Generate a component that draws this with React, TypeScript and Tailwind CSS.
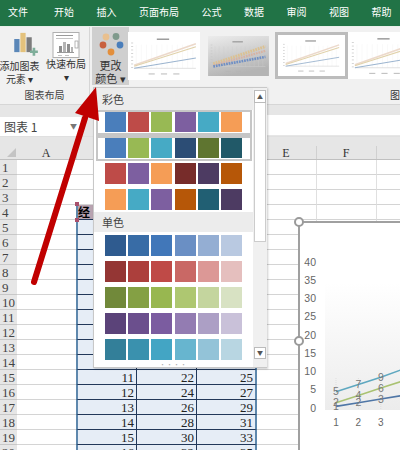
const cjk = { fontFamily: '"Noto Sans CJK SC", sans-serif' };

const tabs = ["文件", "开始", "插入", "页面布局", "公式", "数据", "审阅", "视图", "帮助"];
const colored = [
  ["#4a7ebb", "#be4b48", "#98b954", "#7d5fa0", "#46aac5", "#f59d56"],
  ["#4a7ebb", "#98b954", "#46aac5", "#2c4d75", "#5f7530", "#215968"],
  ["#be4b48", "#7d5fa0", "#f59d56", "#772c2a", "#4d3b62", "#b65708"],
  ["#f59d56", "#46aac5", "#7d5fa0", "#b65708", "#215f73", "#4d3b62"],
];
const mono = [
  ["#2f5b8f", "#386ca6", "#4177b9", "#6a8fc4", "#94aed3", "#b9c9e1"],
  ["#943634", "#ac3f3c", "#bf4a47", "#c96865", "#dc9896", "#e5bfbe"],
  ["#71893a", "#84a044", "#98b750", "#aec771", "#c4d59e", "#d8e2c3"],
  ["#5b4379", "#6b4f8d", "#7b5ca0", "#937cb2", "#ac9fc5", "#c9c1d9"],
  ["#337f99", "#3a91ae", "#43a5c4", "#67b5cf", "#93c3d8", "#b8d6e2"],
];

function Swatches({ rows }: { rows: string[][] }) {
  return (
    <div className="flex flex-col gap-[5px] pl-[11px] pt-[1px]">
      {rows.map((r, i) => (
        <div key={i} className="flex gap-[2.2px] h-[21px]">
          {r.map((c, j) => (
            <div key={j} className="w-[21px] h-[21px]" style={{ background: c }} />
          ))}
        </div>
      ))}
    </div>
  );
}

function Thumb({ kind }: { kind: number }) {
  return (
    <svg viewBox="0 0 70 46" className="w-full h-full block">
      {kind === 1 && (
        <>
          <defs>
            <linearGradient id="g1" x1="0" y1="0" x2="0.3" y2="1">
              <stop offset="0" stopColor="#ececec" />
              <stop offset="1" stopColor="#b4b4b4" />
            </linearGradient>
          </defs>
          <rect width="70" height="46" fill="url(#g1)" />
        </>
      )}
      <rect x="28" y="6" width="12" height="1.4" fill="#999" />
      {[0, 1, 2, 3, 4, 5, 6, 7].map((i) => (
        <rect key={i} x="3" y={10 + i * 3.4} width="2" height="0.7" fill="#c4c4c4" />
      ))}
      {[0, 1, 2, 3, 4, 5, 6, 7, 8, 9, 10, 11].map((i) => (
        <line key={i} x1={8 + i * 5} x2={8 + i * 5} y1="12" y2="35" stroke={kind === 1 ? "#cfcfcf" : "#f1f1f1"} strokeWidth="0.4" />
      ))}
      <line x1="6" y1="35" x2="66" y2="35" stroke="#cfcfcf" strokeWidth="0.6" />
      {kind === 1 ? (
        <>
          <line x1="6" y1="32" x2="66" y2="12" stroke="#dcc191" strokeWidth="3.4" strokeDasharray="2 1" />
          <line x1="6" y1="34" x2="66" y2="17" stroke="#d8b3a2" strokeWidth="2.6" strokeDasharray="2 1" />
          <line x1="6" y1="35" x2="66" y2="24" stroke="#6f8fc4" strokeWidth="3" strokeDasharray="2 1" />
        </>
      ) : (
        <>
          <line x1="6" y1="32" x2="66" y2="11" stroke="#ecd9cb" strokeWidth="1.6" />
          <line x1="6" y1="33" x2="66" y2="14" stroke="#e1d2ab" strokeWidth="1.2" />
          <line x1="6" y1="35" x2="66" y2="25" stroke="#9bb4cf" strokeWidth="1" />
        </>
      )}
      <rect x="20" y="40" width="6" height="0.9" fill="#b4b4b4" />
      <rect x="32" y="40" width="6" height="0.9" fill="#b4b4b4" />
      <rect x="44" y="40" width="6" height="0.9" fill="#b4b4b4" />
    </svg>
  );
}

const rowsData: Record<number, number[]> = {
  15: [11, 22, 25],
  16: [12, 24, 27],
  17: [13, 26, 29],
  18: [14, 28, 31],
  19: [15, 30, 33],
  20: [16, 32, 35],
};

const cols = ["A", "B", "C", "D", "E", "F"];
const serif = { fontFamily: '"Liberation Serif", serif' };

function Row({ n }: { n: number }) {
  const inTable = n >= 4;
  const tbl = inTable
    ? "bg-[#e6edf6] border-b border-b-[#22385a]"
    : "border-b border-b-[#d4d4d4]";
  const values = rowsData[n];
  return (
    <div className="flex h-[15px] shrink-0 text-[13px] leading-[15px] text-[#222]" style={serif}>
      <div className="w-[17px] shrink-0 bg-[#e6e6e6] border-b border-b-[#c8c8c8] text-[#444] pl-[2px] overflow-hidden">
        {n}
      </div>
      <div className="w-[59px] shrink-0 border-b border-b-[#d4d4d4]" />
      <div className={`w-[61px] shrink-0 text-right pr-[2px] ${tbl} ${inTable ? "border-l-2 border-l-[#5e88ad] border-r border-r-[#22385a]" : ""}`}>
        {n === 4 ? (
          <div className="w-[16px] h-[14px] bg-[#b8a3b0] text-left text-[12px] leading-[14px] text-black font-bold" style={cjk}>
            经
          </div>
        ) : (
          values?.[0]
        )}
      </div>
      <div className={`w-[60px] shrink-0 text-right pr-[2px] ${tbl} ${inTable ? "border-r border-r-[#22385a]" : ""}`}>{values?.[1]}</div>
      <div className={`w-[60px] shrink-0 text-right pr-[2px] ${tbl} ${inTable ? "border-r-2 border-r-[#5e88ad]" : ""}`}>{values?.[2]}</div>
      <div className="w-[60px] shrink-0 border-b border-b-[#d4d4d4] border-r border-r-[#e0e0e0]" />
      <div className="w-[60px] shrink-0 border-b border-b-[#d4d4d4] border-r border-r-[#e0e0e0]" />
      <div className="flex-1 border-b border-b-[#d4d4d4]" />
    </div>
  );
}

const yTicks = [0, 5, 10, 15, 20, 25, 30, 35, 40];
const series = [
  { color: "#5fa8c0", vals: [5, 7, 9, 11.2], labels: [5, 7, 9] },
  { color: "#a9c272", vals: [2, 4, 6, 8], labels: [2, 4, 6] },
  { color: "#4f76a6", vals: [1, 2, 3, 4], labels: [1, 2, 3] },
];

function Chart() {
  const sx = (i: number) => 36 + i * 22.4;
  const sy = (v: number) => 187 - v * 3.65;
  return (
    <svg width="100" height="227" className="block">
      <defs>
        <linearGradient id="plot" x1="0" y1="0" x2="0" y2="1">
          <stop offset="0" stopColor="#ffffff" />
          <stop offset="1" stopColor="#ececec" />
        </linearGradient>
      </defs>
      <rect x="25" y="60" width="75" height="127" fill="url(#plot)" />
      {yTicks.map((t) => (
        <text key={t} x="16" y={sy(t) + 1.5} textAnchor="end" fontSize="10.5" fill="#666" fontFamily="Liberation Sans, sans-serif">
          {t}
        </text>
      ))}
      {[1, 2, 3].map((t, i) => (
        <text key={t} x={sx(i)} y={203} textAnchor="middle" fontSize="10" fill="#666" fontFamily="Liberation Sans, sans-serif">
          {t}
        </text>
      ))}
      {[0, 1, 2, 3].map((i) => (
        <line key={i} x1={sx(i)} x2={sx(i)} y1="155" y2="187" stroke="#d8d8d8" strokeWidth="0.7" strokeDasharray="1 1" />
      ))}
      {series.map((s) => (
        <g key={s.color}>
          <polyline points={s.vals.map((v, i) => `${sx(i)},${sy(v)}`).join(" ")} fill="none" stroke={s.color} strokeWidth="1.6" />
          {s.labels.map((l, i) => (
            <text key={i} x={sx(i)} y={sy(l) + 3.5} textAnchor="middle" fontSize="10.5" fill="#777" fontFamily="Liberation Sans, sans-serif">
              {l}
            </text>
          ))}
        </g>
      ))}
    </svg>
  );
}

export default function App() {
  return (
    <div className="relative w-[400px] h-[450px] overflow-hidden bg-white" style={cjk}>
      {/* Tabs */}
      <div className="flex h-[26px] bg-[#217346] text-white text-[10px] leading-[24px] pl-[8px] gap-[22.5px] whitespace-nowrap">
        {tabs.map((t, i) => (
          <span key={t} className={i === 1 ? "ml-[3.5px]" : ""}>{t}</span>
        ))}
      </div>
      <div className="h-[1px] bg-[#e8f0ea]" />

      {/* Ribbon */}
      <div className="flex h-[78px] bg-[#f1f1f1] border-b border-b-[#d6d6d6] text-[#333]">
        <div className="w-[90px] shrink-0 border-r border-r-[#d6d6d6] flex flex-col">
          <div className="flex h-[58px]">
            <div className="w-[43px] flex flex-col items-center overflow-visible">
              <svg width="34" height="32" viewBox="0 0 34 32" className="mt-[5px] ml-[2px]">
                <rect x="7" y="8" width="6" height="15" fill="#5b87b8" />
                <rect x="14" y="1" width="6" height="22" fill="#e4c27c" />
                <rect x="21" y="6" width="6" height="17" fill="#7c7c7c" />
                <path d="M25 21h3v-3h3v3h3v3h-3v3h-3v-3h-3z" fill="#7fae9a" />
              </svg>
              <div className="text-[10px] leading-[13px] whitespace-nowrap -ml-[4px] mt-[-1px] text-center">添加图表<br />元素 ▾</div>
            </div>
            <div className="flex-1 flex flex-col items-center">
              <svg width="28" height="27" viewBox="0 0 28 27" className="mt-[5px] ml-[-1px]">
                <rect x="1" y="0.5" width="26" height="25" fill="#fff" stroke="#b0b0b0" />
                <rect x="4" y="3" width="17" height="1" fill="#9a9a9a" />
                <rect x="4" y="6" width="17" height="1" fill="#c4c4c4" />
                <rect x="7" y="14" width="3" height="6" fill="#8f8f8f" />
                <rect x="11" y="10" width="3" height="10" fill="#b5b5b5" />
                <rect x="15" y="12" width="3" height="8" fill="#8f8f8f" />
                <rect x="19" y="15" width="2" height="5" fill="#b5b5b5" />
                <line x1="5" x2="22" y1="20.5" y2="20.5" stroke="#999" />
                <rect x="23" y="9" width="3" height="7" fill="none" stroke="#999" strokeWidth="0.7" />
                <rect x="6" y="23" width="4" height="1" fill="#c4c4c4" />
                <rect x="13" y="23" width="4" height="1" fill="#c4c4c4" />
              </svg>
              <div className="text-[10px] leading-[13px] whitespace-nowrap text-center mt-[-2px]">快速布局<br />▾</div>
            </div>
          </div>
          <div className="text-[10px] text-center leading-[14px] mt-[3px] text-[#444]">图表布局</div>
        </div>
        <div className="w-[37px] ml-[2px] shrink-0 h-[58px] bg-[#cfcfcf] flex flex-col items-center">
          <svg width="30" height="30" viewBox="0 0 30 30" className="mt-[3px]">
            <circle cx="10" cy="7" r="3.4" fill="#e9c08e" />
            <circle cx="20" cy="6.5" r="3.4" fill="#7f9a8c" />
            <circle cx="7" cy="15" r="3.4" fill="#c8603f" />
            <circle cx="24" cy="15" r="3.4" fill="#4a7ebb" />
            <circle cx="15" cy="22" r="3.4" fill="#e38f3c" />
          </svg>
          <div className="text-[11px] leading-[13px] text-center whitespace-nowrap mt-[-1px]">更改<br />颜色 ▾</div>
        </div>
        <div className="flex items-start pt-[5px] ml-[-1px] flex-1 overflow-hidden relative">
          <div className="w-[72px] h-[48px] bg-white shrink-0"><Thumb kind={0} /></div>
          <div className="w-[67px] h-[40px] mt-[4px] ml-[5px] shrink-0"><Thumb kind={1} /></div>
          <div className="w-[73px] h-[47px] ml-[3px] bg-white border-[3px] border-[#bcbcbc] shrink-0"><Thumb kind={0} /></div>
          <div className="w-[73px] h-[47px] bg-white shrink-0"><Thumb kind={0} /></div>
          <div className="absolute right-[0px] top-[61px] text-[10px] leading-[14px] w-[10px] overflow-hidden whitespace-nowrap text-[#333]">图</div>
        </div>
      </div>

      {/* Formula row */}
      <div className="flex h-[32px] bg-[#e6e6e6] border-b border-b-[#e0e0e0]">
        <div className="w-[81px] h-[19px] mt-[12px] bg-white flex items-center justify-between pl-[4px] pr-[4px] text-[12px] text-[#444]">
          <span>图表 1</span>
          <span className="text-[7px] text-[#777]">▼</span>
        </div>
        <div className="flex-1 h-[20px] mt-[10px] ml-[186px] bg-white" />
      </div>

      {/* Column headers */}
      <div className="flex h-[23px] bg-[#e6e6e6] border-b border-b-[#c0c0c0] text-[12px] text-[#333]" style={serif}>
        <div className="w-[17px] shrink-0 flex items-end justify-end pb-[2px] pr-[1px]">
          <div className="w-0 h-0 border-l-[9px] border-l-transparent border-b-[9px] border-b-[#c4c4c4]" />
        </div>
        {cols.map((c) => (
          <div key={c} className="w-[60px] shrink-0 flex items-center justify-center leading-[14px] border-r border-r-[#d0d0d0] mt-[9px] pr-[1px]">
            {c}
          </div>
        ))}
      </div>

      {/* Rows */}
      <div className="flex flex-col">
        {Array.from({ length: 20 }, (_, i) => (
          <Row key={i} n={i + 1} />
        ))}
      </div>

      {/* Selection handles */}
      <div className="absolute left-[75px] top-[202px] w-[4px] h-[4px] bg-[#a8506c]" />
      <div className="absolute left-[75px] top-[218px] w-[4px] h-[4px] bg-[#a8506c]" />

      {/* Chart object */}
      <div className="absolute left-[298px] top-[221px] w-[102px] h-[229px] bg-white border-l-2 border-t-2 border-[#a0a0a0]">
        <Chart />
      </div>
      <div className="absolute left-[294px] top-[217px] w-[10px] h-[10px] rounded-full bg-white border-2 border-[#9a9a9a]" />
      <div className="absolute left-[294px] top-[336px] w-[10px] h-[10px] rounded-full bg-white border-2 border-[#9a9a9a]" />

      {/* Colour menu */}
      <div className="absolute left-[93px] top-[87px] w-[174px] h-[281px] bg-white border border-[#c8c8c8] shadow-[1px_1px_2px_rgba(0,0,0,0.2)]">
        <div className="w-[159px] h-[22px] bg-[#ececec] text-[11px] leading-[22px] pl-[8px] text-[#444]">彩色</div>
        <Swatches rows={colored} />
        <div className="w-[159px] h-[20px] mt-[2px] bg-[#ececec] text-[11px] leading-[20px] pl-[8px] text-[#444]">单色</div>
        <div className="mt-[2px]"><Swatches rows={mono} /></div>
        <div className="text-center w-[159px] mt-[1px] text-[6px] leading-[8px] tracking-[1px] text-[#aaa]">••••</div>

        {/* Selected outline */}
        <div className="absolute left-[2px] top-[22px] w-[156px] h-[51px] border-2 border-[#c6c6c6]">
          <div className="h-[5px] mt-[21px] bg-[#c6c6c6]" />
        </div>

        {/* Scrollbar */}
        <div className="absolute left-[159px] top-0 w-[14px] h-full bg-[#f0f0f0] flex flex-col pl-[1px] pt-[2px]">
          <div className="w-[12px] h-[13px] bg-white border border-[#bbb] flex items-center justify-center text-[6px] leading-none text-[#555]">▲</div>
          <div className="w-[12px] h-[139px] bg-white border border-[#ccc] border-t-0" />
          <div className="flex-1" />
          <div className="w-[12px] h-[12px] bg-white border border-[#bbb] flex items-center justify-center text-[6px] leading-none text-[#555] mb-[8px]">▼</div>
        </div>
      </div>

      {/* Red arrow */}
      <svg className="absolute left-0 top-0 pointer-events-none" width="400" height="450">
        <line x1="34" y1="282" x2="85" y2="118" stroke="#c00000" strokeWidth="6" strokeLinecap="round" />
        <polygon points="96,87 75,113 99,121" fill="#c00000" />
      </svg>
    </div>
  );
}
